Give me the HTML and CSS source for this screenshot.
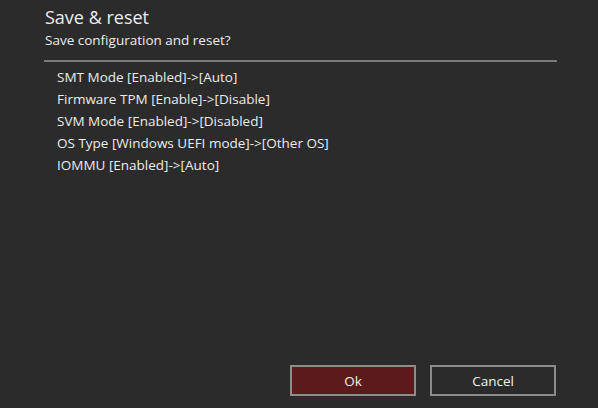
FILE: index.html
```html
<!DOCTYPE html>
<html>
<head>
<meta charset="utf-8">
<link rel="stylesheet" href="styles.css">
</head>
<body>
<div class="dialog">
  <div class="header">
    <div class="title">Save &amp; reset</div>
    <div class="subtitle">Save configuration and reset?</div>
  </div>
  <div class="divider"></div>
  <ul class="changes">
    <li>SMT Mode [Enabled]-&gt;[Auto]</li>
    <li>Firmware TPM [Enable]-&gt;[Disable]</li>
    <li>SVM Mode [Enabled]-&gt;[Disabled]</li>
    <li>OS Type [Windows UEFI mode]-&gt;[Other OS]</li>
    <li>IOMMU [Enabled]-&gt;[Auto]</li>
  </ul>
  <div class="actions">
    <button class="btn btn-ok">Ok</button>
    <button class="btn btn-cancel">Cancel</button>
  </div>
</div>
</body>
</html>
```
FILE: styles.css
```css
html, body {
  margin: 0;
  padding: 0;
  background: #2b2b2b;
}
body {
  width: 598px;
  height: 408px;
  overflow: hidden;
  font-family: "Open Sans", "Noto Sans", sans-serif;
  color: #ececec;
}
.dialog {
  display: flex;
  flex-direction: column;
  height: 408px;
  box-sizing: border-box;
  padding: 5px 41px 0 45px;
}
.title {
  font-size: 18px;
  line-height: 25px;
}
.subtitle {
  font-size: 13.5px;
  line-height: 20px;
  margin-top: 0;
}
.divider {
  height: 2px;
  background: #7a7a7a;
  margin-top: 10px;
  margin-left: -1px;
}
.changes {
  list-style: none;
  margin: 4px 0 0 0;
  padding: 0 0 0 12px;
  font-size: 13.5px;
  line-height: 22px;
}
.actions {
  margin-top: auto;
  margin-bottom: 12px;
  display: flex;
  justify-content: flex-end;
  gap: 14px;
  padding-right: 1px;
}
.btn {
  width: 126px;
  height: 31px;
  box-sizing: border-box;
  border: 2px solid #8c8c8c;
  font-family: "Open Sans", "Noto Sans", sans-serif;
  font-size: 13.5px;
  color: #f2f2f2;
  padding: 0;
}
.btn-ok {
  background: #5c1a1c;
}
.btn-cancel {
  background: #2b2b2b;
}
```
